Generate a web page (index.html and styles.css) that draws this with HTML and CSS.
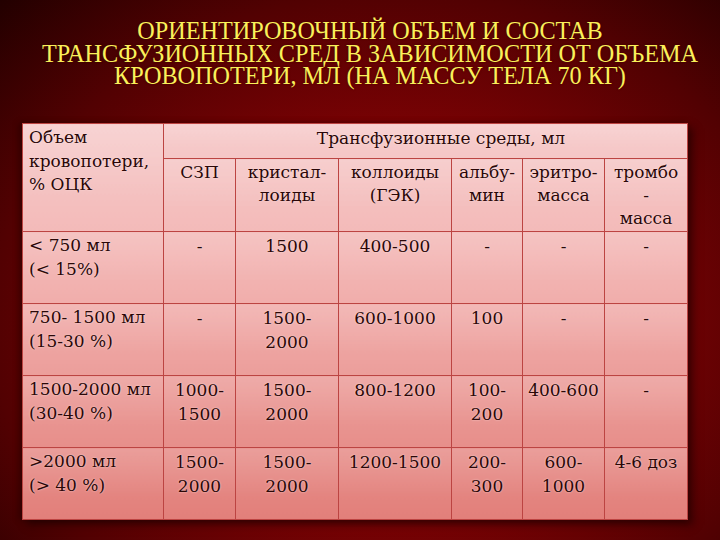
FILE: index.html
```html
<!DOCTYPE html>
<html lang="ru">
<head>
<meta charset="utf-8">
<link rel="stylesheet" href="styles.css">
</head>
<body>
<div class="slide">
  <h1 class="title">ОРИЕНТИРОВОЧНЫЙ ОБЪЕМ И СОСТАВ<br>ТРАНСФУЗИОННЫХ СРЕД В ЗАВИСИМОСТИ ОТ ОБЪЕМА<br>КРОВОПОТЕРИ, МЛ (НА МАССУ ТЕЛА 70 КГ)</h1>
  <table class="grid">
    <colgroup>
      <col class="c1"><col class="c2"><col class="c3"><col class="c4"><col class="c5"><col class="c6"><col class="c7">
    </colgroup>
    <tr class="h1row">
      <td rowspan="2" class="left">Объем<br>кровопотери,<br>% ОЦК</td>
      <td colspan="6" class="group">Трансфузионные среды, мл</td>
    </tr>
    <tr class="h2row">
      <td>СЗП</td>
      <td>кристал-<br>лоиды</td>
      <td>коллоиды<br>(ГЭК)</td>
      <td>альбу-<br>мин</td>
      <td>эритро-<br>масса</td>
      <td>тромбо<br>-<br>масса</td>
    </tr>
    <tr class="row">
      <td class="left">&lt; 750 мл<br>(&lt; 15%)</td>
      <td>-</td><td>1500</td><td>400-500</td><td>-</td><td>-</td><td>-</td>
    </tr>
    <tr class="row">
      <td class="left">750- 1500 мл<br>(15-30 %)</td>
      <td>-</td><td>1500-<br>2000</td><td>600-1000</td><td>100</td><td>-</td><td>-</td>
    </tr>
    <tr class="row">
      <td class="left">1500-2000 мл<br>(30-40 %)</td>
      <td>1000-<br>1500</td><td>1500-<br>2000</td><td>800-1200</td><td>100-<br>200</td><td>400-600</td><td>-</td>
    </tr>
    <tr class="row">
      <td class="left">&gt;2000 мл<br>(&gt; 40 %)</td>
      <td>1500-<br>2000</td><td>1500-<br>2000</td><td>1200-1500</td><td>200-<br>300</td><td>600-<br>1000</td><td>4-6 доз</td>
    </tr>
  </table>
</div>
</body>
</html>
```

FILE: styles.css
```css
html, body {
  margin: 0;
  padding: 0;
}
body {
  width: 720px;
  height: 540px;
  overflow: hidden;
}
.slide {
  width: 720px;
  height: 540px;
  box-sizing: border-box;
  padding-top: 20px;
  background:
    radial-gradient(ellipse 78% 85% at 55% 60%, #900406 0%, #7c0204 40%, #520102 72%, #220000 100%);
}
.title {
  margin: 0 0 0 20px;
  width: 700px;
  text-align: center;
  font-family: "Liberation Serif", "Times New Roman", serif;
  font-weight: normal;
  font-size: 24.2px;
  line-height: 22.5px;
  color: #faf05a;
  text-shadow: 0 0 2px rgba(60, 0, 0, 0.6);
  height: 103px;
}
.grid {
  margin-left: 22px;
  border-collapse: collapse;
  table-layout: fixed;
  width: 665px;
  font-family: "DejaVu Serif", "Liberation Serif", serif;
  font-size: 17px;
  line-height: 24px;
  color: #2a0707;
  background: linear-gradient(180deg, #f6cccc 0%, #f2b2b0 40%, #e27f7a 100%);
  box-shadow: 5px 5px 8px rgba(20, 0, 0, 0.55), -3px 0 6px rgba(20, 0, 0, 0.4);
}
.c1 { width: 141px; }
.c2 { width: 72px; }
.c3 { width: 103px; }
.c4 { width: 113px; }
.c5 { width: 71px; }
.c6 { width: 82px; }
.c7 { width: 83px; }
.grid td {
  border: 1px solid #bc4442;
  vertical-align: top;
  text-align: center;
  padding: 2px 1px 0 1px;
  white-space: nowrap;
  text-shadow: 0 0 2px rgba(255, 235, 235, 0.8);
  background: linear-gradient(180deg, rgba(255,255,255,0.14), rgba(255,255,255,0) 70%);
}
.grid td.left {
  text-align: left;
  padding-left: 6px;
  line-height: 23.5px;
}
.grid td.group {
  padding-left: 32px;
}
.h1row { height: 35px; }
.h2row { height: 73px; }
.row { height: 72px; }
.h2row td {
  padding-top: 2px;
  line-height: 23px;
}
```
